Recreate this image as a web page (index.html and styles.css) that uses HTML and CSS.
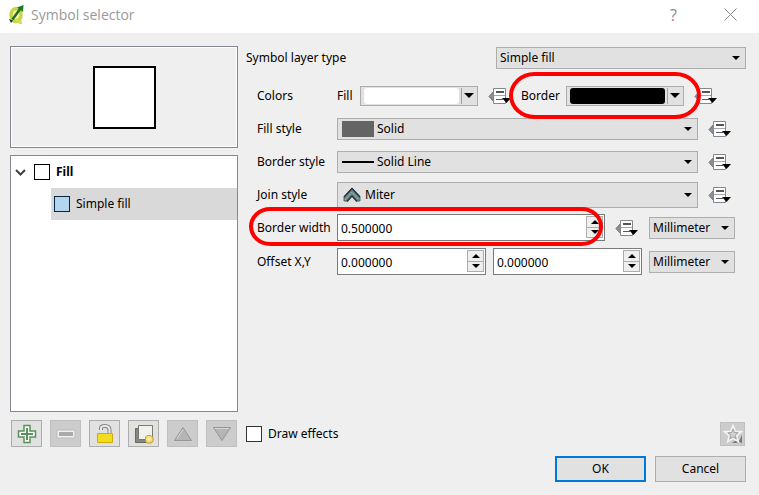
FILE: index.html
```html
<!DOCTYPE html>
<html lang="en">
<head>
<meta charset="utf-8">
<title>Symbol selector</title>
<link rel="stylesheet" href="styles.css">
</head>
<body>
<svg class="defs" aria-hidden="true">
  <symbol id="override" viewBox="0 0 23 18">
    <path d="M6 4 1 9.500 6 15z" fill="#8c9094" stroke="#6f7377"/>
    <path d="M5.500 1.500h12v15h-12z" fill="#fff" stroke="#85888b"/>
    <path d="M8 5h8" stroke="#555" stroke-width="2"/>
    <path d="M6 8.500h11" stroke="#a5a8aa"/>
    <path d="M8 12.500h7" stroke="#555a66"/>
    <path d="M14 11h9l-4.500 5z" fill="#000"/>
  </symbol>
</svg>
<header class="titlebar">
  <svg class="logo" viewBox="0 0 17 20" aria-hidden="true">
    <ellipse cx="8" cy="10" rx="5" ry="6.500" fill="#f2f7a0" stroke="#c9d34a" stroke-width="3.500"/>
    <path d="M8 14q3 4.500 6 3.500" fill="none" stroke="#d3dc58" stroke-width="3"/>
    <path d="M4.500 14.500 12 4" stroke="#216b22" stroke-width="2.500"/>
    <path d="M9 2.500 15.500 0 15 7z" fill="#1b7a24"/>
    <path d="M1 14l4 1.500L3 18z" fill="#173d19"/>
  </svg>
  <h1>Symbol selector</h1>
  <button class="caption" aria-label="Help">?</button>
  <button class="caption" aria-label="Close"><svg width="13" height="13" viewBox="0 0 13 13"><path d="M.5.5l12 12M12.500.5l-12 12" stroke="#888"/></svg></button>
</header>
<main class="content">
  <section class="layers">
    <div class="preview"><div class="sample"></div></div>
    <ul class="tree">
      <li class="node root">
        <svg width="11" height="7" viewBox="0 0 11 7"><path d="M1 1l4.500 4.500L10 1" fill="none" stroke="#404040" stroke-width="2"/></svg>
        <span class="chip"></span>Fill
      </li>
      <li class="node child"><span class="chip blue"></span>Simple fill</li>
    </ul>
    <div class="tools">
      <button class="tool" aria-label="Add layer"><svg viewBox="0 0 20 20"><path d="M7 1.500h6V7h5.500v6H13v5.500H7V13H1.500V7H7z" fill="#fff" stroke="#589158" stroke-width="1.500"/><path d="M10 4v12M4 10h12" stroke="#589158" stroke-width="2"/></svg></button>
      <button class="tool" aria-label="Remove layer" disabled><svg viewBox="0 0 20 20"><path d="M2 7h16v6H2z" fill="#aaa" stroke="#efefef" stroke-width="2"/><path d="M1 6h18v8H1z" fill="none" stroke="#bbb"/></svg></button>
      <button class="tool" aria-label="Lock layer"><svg viewBox="0 0 20 20"><path d="M6 6V4q0-2 4-2 4.500 0 4.500 4v3" fill="none" stroke="#858585" stroke-width="4"/><path d="M6 6V4q0-2 4-2 4.500 0 4.500 4v3" fill="none" stroke="#e7e7e7" stroke-width="2"/><path d="M2.500 9.500h15v9h-15z" fill="#f3dc1d" stroke="#d0aa12"/></svg></button>
      <button class="tool" aria-label="Duplicate layer"><svg viewBox="0 0 20 20"><path d="M1.500 4.500h12v14h-12z" fill="#85877f" stroke="#686a63"/><path d="M4.500 1.500h14v14h-14z" fill="#f0f0ed" stroke="#777973"/><path d="M13 11.500h4l2 2v4l-2 1.500h-4l-1.500-2v-4z" fill="#ecd77e" stroke="#d1a015"/><path d="M15 12.500v5M12.500 15h5" stroke="#fff5c7"/></svg></button>
      <button class="tool" aria-label="Move up" disabled><svg viewBox="0 0 20 20"><path d="M10 3.500 18.500 16.500h-17z" fill="#b5b5b5" stroke="#969696"/><path d="M10 5.500 4 14.500" stroke="#d8d8d8"/></svg></button>
      <button class="tool" aria-label="Move down" disabled><svg viewBox="0 0 20 20"><path d="M10 16.500 18.500 3.500h-17z" fill="#b5b5b5" stroke="#969696"/><path d="M3 4.500h14" stroke="#d8d8d8"/></svg></button>
    </div>
  </section>
  <section class="properties">
    <div class="type-row">
      <label for="layer-type">Symbol layer type</label>
      <span class="select layer-type"><select id="layer-type"><option>Simple fill</option></select></span>
    </div>
    <div class="form">
      <div class="row">
        <span class="name">Colors</span>
        <div class="group"><label for="fill-color">Fill</label>
          <button class="color" id="fill-color"><span class="swatch"></span><span class="drop"></span></button></div>
        <button class="override" aria-label="Override fill"><svg><use href="#override"/></svg></button>
        <div class="group marked"><label for="border-color">Border</label>
          <button class="color" id="border-color"><span class="swatch black"></span><span class="drop"></span></button></div>
        <button class="override" aria-label="Override border"><svg><use href="#override"/></svg></button>
      </div>
      <div class="row">
        <label class="name" for="fill-style">Fill style</label>
        <span class="select wide"><span class="pic solid"></span><select id="fill-style"><option>Solid</option></select></span>
        <button class="override" aria-label="Override fill style"><svg><use href="#override"/></svg></button>
      </div>
      <div class="row">
        <label class="name" for="border-style">Border style</label>
        <span class="select wide"><span class="pic line"></span><select id="border-style"><option>Solid Line</option></select></span>
        <button class="override" aria-label="Override border style"><svg><use href="#override"/></svg></button>
      </div>
      <div class="row">
        <label class="name" for="join-style">Join style</label>
        <span class="select wide tall"><svg class="join" viewBox="0 0 18 16"><path d="M1 14V10L9 1l8 9v4h-3L9 8l-5 6z" fill="#67889c" stroke="#59666b"/><path d="M1 10 9 1.500 17 10M4 14.500 9 9l5 5.500" fill="none" stroke="#223039" stroke-width="1.500"/><path d="M2 13 9 5l7 8" fill="none" stroke="#b7b84e" stroke-dasharray="2 1"/></svg><select id="join-style"><option>Miter</option></select></span>
        <button class="override" aria-label="Override join style"><svg><use href="#override"/></svg></button>
      </div>
      <div class="row measured marked">
        <label class="name" for="border-width">Border width</label>
        <span class="spin"><input id="border-width" type="text" value="0.500000"><span class="steps"><button class="up" aria-label="Increase"></button><button class="down" aria-label="Decrease"></button></span></span>
        <button class="override" aria-label="Override border width"><svg><use href="#override"/></svg></button>
        <span class="select unit"><select aria-label="Border width unit"><option>Millimeter</option></select></span>
      </div>
      <div class="row measured offsets">
        <label class="name" for="offset-x">Offset X,Y</label>
        <span class="spin"><input id="offset-x" type="text" value="0.000000"><span class="steps"><button class="up" aria-label="Increase"></button><button class="down" aria-label="Decrease"></button></span></span>
        <span class="spin"><input aria-label="Offset Y" type="text" value="0.000000"><span class="steps"><button class="up" aria-label="Increase"></button><button class="down" aria-label="Decrease"></button></span></span>
        <span class="select unit"><select aria-label="Offset unit"><option>Millimeter</option></select></span>
      </div>
    </div>
    <div class="effects">
      <label><input type="checkbox">Draw effects</label>
      <button class="tool star" aria-label="Customize effects" disabled><svg viewBox="0 0 20 20"><path d="M9 19l3-2h4l3-6v8l-3-1-3 1z" fill="#777"/><path d="M10 1.500l2.300 5.800 6.200.4-4.800 4 1.600 6-5.300-3.300-5.300 3.300 1.600-6-4.800-4 6.200-.4z" fill="#ccc" stroke="#f4f4f4" stroke-width="1.500"/><path d="M10 5l1.300 3.500 3.700.3-2.800 2.400.9 3.600-3.100-2-3.100 2 .9-3.600L5 8.800l3.700-.3z" fill="#d2d2d2" stroke="#a5a5a5"/></svg></button>
    </div>
  </section>
</main>
<footer class="actions">
  <button class="action primary">OK</button>
  <button class="action">Cancel</button>
</footer>
</body>
</html>
```
FILE: styles.css
```css
*, *::before, *::after { box-sizing: border-box; }

body {
  margin: 0;
  min-height: 100vh;
  display: flex;
  flex-direction: column;
  background: #efefef;
  color: #000;
  font: 12px/16px "Noto Sans", sans-serif;
}

button, input, select { font: inherit; color: inherit; margin: 0; }
button { padding: 0; }
.defs { display: none; }

.titlebar {
  display: flex;
  align-items: center;
  height: 33px;
  padding: 0 0 4px 8px;
  background: #fff;
  color: #999;
}
.logo { width: 17px; height: 20px; margin-right: 6px; }
.titlebar h1 {
  flex: 1;
  margin: 0;
  font: 14px/20px "Open Sans", sans-serif;
}
.caption {
  display: flex;
  align-items: center;
  justify-content: center;
  width: 57px;
  height: 28px;
  border: 0;
  background: none;
  font: 16px/20px "Open Sans", sans-serif;
  color: #888;
}

.content {
  flex: 1;
  display: flex;
  gap: 8px;
  padding: 13px 13px 0 10px;
}

.layers {
  display: flex;
  flex: none;
  flex-direction: column;
  width: 228px;
}
.preview {
  display: flex;
  align-items: center;
  justify-content: center;
  height: 102px;
  border: 1px solid #828790;
  box-shadow: inset 0 0 0 1px #fff;
}
.sample {
  width: 63px;
  height: 63px;
  border: 2px solid #000;
  background: #fff;
}
.tree {
  flex: 1;
  margin: 7px 0 8px;
  padding: 0;
  list-style: none;
  border: 1px solid #828790;
  background: #fff;
}
.node {
  display: flex;
  align-items: center;
  gap: 6px;
  height: 32px;
}
.root { padding-left: 4px; font-weight: bold; }
.root svg { margin-right: 2px; }
.child { margin-left: 40px; padding-left: 3px; background: #d9d9d9; }
.chip { width: 16px; height: 16px; border: 1px solid #000; background: #fff; }
.blue { border-color: #0a2540; background: #b2d5f1; }

.tools { display: flex; gap: 8px; padding-left: 1px; }
.tool {
  display: flex;
  flex: none;
  align-items: center;
  justify-content: center;
  width: 31px;
  height: 27px;
  border: 1px solid #adadad;
  background: #e1e1e1;
}
.tool:disabled { border-color: #bfbfbf; background: #ccc; }
.tool svg { width: 20px; height: 20px; }

.properties { flex: 1; min-width: 0; display: flex; flex-direction: column; }
.type-row {
  display: flex;
  align-items: center;
  justify-content: space-between;
  height: 24px;
}
.layer-type { width: 250px; }

.select {
  position: relative;
  display: flex;
  align-items: center;
  height: 22px;
  border: 1px solid #adadad;
  background: #e1e1e1;
}
.select select {
  flex: 1;
  min-width: 0;
  height: 100%;
  padding: 0 3px;
  border: 0;
  appearance: none;
  background: none;
}
.select::after {
  content: "";
  position: absolute;
  right: 5px;
  top: 8px;
  border: 4px solid transparent;
  border-top-color: #000;
  border-bottom: 0;
  pointer-events: none;
}
.tall { height: 26px; }
.select.tall::after { top: 10px; }
.wide { width: 361px; }
.unit { width: 86px; margin-left: auto; }
.pic { width: 32px; height: 16px; margin-left: 4px; }
.solid { background: #646464; }
.line { height: 2px; background: #000; }
.join { width: 18px; height: 16px; margin: 0 1px 0 5px; }

.form { padding: 9px 0 0 11px; }
.row {
  position: relative;
  display: flex;
  align-items: center;
  height: 33px;
}
.measured { max-width: 478px; }
.name { width: 80px; }
.group {
  position: relative;
  display: flex;
  align-items: center;
  justify-content: space-between;
  width: 141px;
}
.group.marked { width: 163px; }
.color {
  display: flex;
  width: 118px;
  height: 20px;
  padding: 1px 2px 1px 3px;
  border: 1px solid #adadad;
  background: #e1e1e1;
}
.swatch { flex: 1; height: 16px; margin-right: 2px; border-radius: 3px; background: #fff; }
.black { background: #000; }
.drop {
  display: flex;
  align-items: center;
  justify-content: center;
  width: 14px;
  height: 16px;
  border-left: 1px solid #a0a0a0;
}
.drop::before {
  content: "";
  border: 5px solid transparent;
  border-top-color: #000;
  border-bottom: 0;
}
.override {
  width: 23px;
  height: 18px;
  margin: 0 10px;
  border: 0;
  background: none;
}
.override svg { display: block; width: 23px; height: 18px; }

.marked { z-index: 1; }
.marked::after {
  content: "";
  position: absolute;
  border: 4px solid #f00;
  border-radius: 26px / 24px;
  pointer-events: none;
}
.group.marked::after { inset: -14px -17px -13px -12px; }
.row.marked::after { top: -4px; left: -8px; width: 354px; height: 39px; }

.spin {
  display: flex;
  width: 149px;
  height: 27px;
  padding: 1px;
  border: 1px solid #7a7a7a;
  background: #fff;
}
.row.marked .spin { width: 268px; }
.spin input {
  flex: 1;
  min-width: 0;
  padding: 2px 2px 0;
  border: 0;
  background: none;
}
.steps { display: flex; flex-direction: column; width: 17px; margin-bottom: 1px; }
.steps button {
  display: flex;
  align-items: center;
  justify-content: center;
  flex: 1;
  border: 1px solid #adadad;
  background: #efefef;
}
.steps .down { border-top: 0; }
.steps button::before { content: ""; border: 4px solid transparent; }
.steps .up::before { border-top: 0; border-bottom-color: #000; }
.steps .down::before { border-bottom: 0; border-top-color: #000; }
.offsets { gap: 7px; height: 35px; }
.offsets .name { width: 73px; }

.effects {
  display: flex;
  align-items: center;
  justify-content: space-between;
  height: 27px;
  margin-top: auto;
  padding-right: 1px;
}
.effects label { display: flex; align-items: center; gap: 6px; }
.effects input {
  width: 16px;
  height: 16px;
  border: 1px solid #333;
  appearance: none;
  background: #fff;
}
.star { width: 25px; height: 24px; }

.actions {
  display: flex;
  justify-content: flex-end;
  gap: 9px;
  padding: 9px 13px 13px;
}
.action {
  width: 91px;
  height: 26px;
  border: 1px solid #adadad;
  background: #e1e1e1;
}
.primary { border: 2px solid #0078d7; }
```
